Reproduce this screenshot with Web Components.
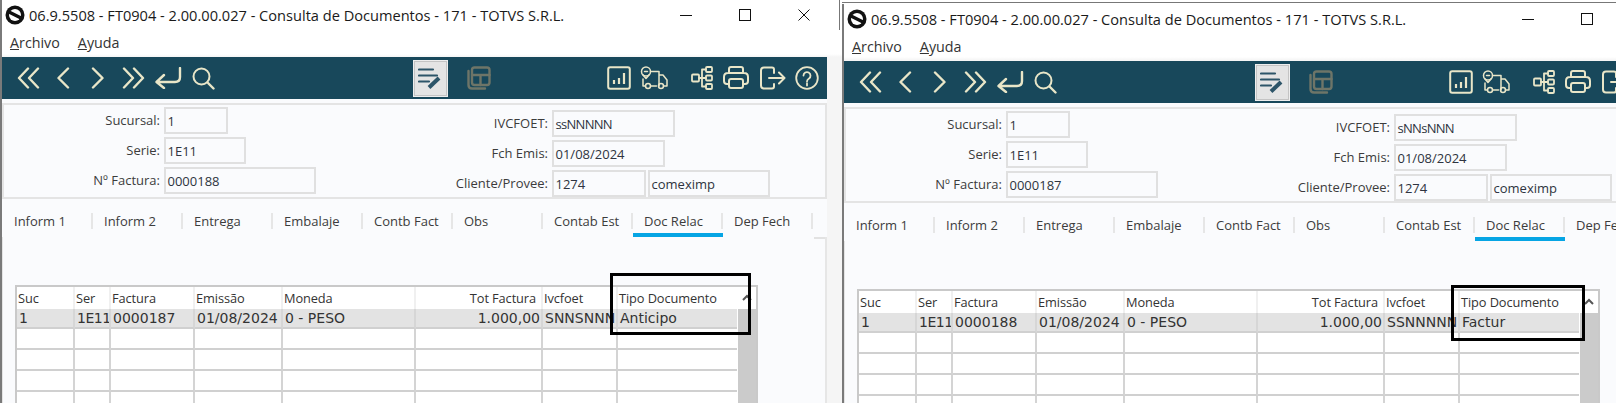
<!DOCTYPE html>
<html lang="es">
<head>
<meta charset="utf-8">
<title>Consulta de Documentos</title>
<style>
  html, body { margin: 0; height: 403px; overflow: hidden; background: #fff; }
  body { display: flex; align-items: flex-start; width: 1616px; font-family: "Open Sans", sans-serif; }
</style>
</head>
<body>
<erp-window caption="06.9.5508 - FT0904 - 2.00.00.027 - Consulta de Documentos - 171 - TOTVS S.R.L.">
  <form-panel>
    <form-field slot="left" label="Sucursal:" width="64" value="1"></form-field>
    <form-field slot="left" label="Serie:" width="82" value="1E11"></form-field>
    <form-field slot="left" label="Nº Factura:" width="152" value="0000188"></form-field>
    <form-field slot="right" label="IVCFOET:" width="123" value="ssNNNNN" tight></form-field>
    <form-field slot="right" label="Fch Emis:" width="113" value="01/08/2024"></form-field>
    <form-field slot="right" label="Cliente/Provee:" width="94" value="1274" extra="comeximp"></form-field>
  </form-panel>
  <tab-strip active="Doc Relac"></tab-strip>
  <doc-grid mark="593,-14,141,62" numero="0000187" ivcfoet="SNNSNNN" tipo="Anticipo"></doc-grid>
</erp-window>
<erp-window second caption="06.9.5508 - FT0904 - 2.00.00.027 - Consulta de Documentos - 171 - TOTVS S.R.L.">
  <form-panel>
    <form-field slot="left" label="Sucursal:" width="64" value="1"></form-field>
    <form-field slot="left" label="Serie:" width="82" value="1E11"></form-field>
    <form-field slot="left" label="Nº Factura:" width="152" value="0000187"></form-field>
    <form-field slot="right" label="IVCFOET:" width="123" value="sNNsNNN" tight></form-field>
    <form-field slot="right" label="Fch Emis:" width="113" value="01/08/2024"></form-field>
    <form-field slot="right" label="Cliente/Provee:" width="94" value="1274" extra="comeximp"></form-field>
  </form-panel>
  <tab-strip active="Doc Relac"></tab-strip>
  <doc-grid mark="592,-6,134,56" numero="0000188" ivcfoet="SSNNNNN" tipo="Factur"></doc-grid>
</erp-window>

<script>
// Toolbar icons, drawn at their real pixel size
const ICONS = {
  first: '<svg width="23" height="22" viewBox="0 0 23 22"><path d="M11 1.5 2 11l9 9.5M21 1.5 12 11l9 9.5"/></svg>',
  prev: '<svg width="14" height="22" viewBox="0 0 14 22"><path d="M12 1.5 2.5 11l9.5 9.5"/></svg>',
  next: '<svg width="14" height="22" viewBox="0 0 14 22"><path d="M2 1.5 11.5 11 2 20.5"/></svg>',
  last: '<svg width="23" height="22" viewBox="0 0 23 22"><path d="M2 1.5 11 11l-9 9.5M12 1.5 21 11l-9 9.5"/></svg>',
  enter: '<svg width="28" height="22" viewBox="0 0 28 22"><path d="M26 1v9q0 5-5 5H3M10 8l-7.500 7 7.500 6"/></svg>',
  search: '<svg width="23" height="23" viewBox="0 0 23 23"><circle cx="9.500" cy="9.500" r="8" stroke-width="2"/><path d="m15.500 15.500 6 6"/></svg>',
  edit: '<svg width="24" height="22" viewBox="0 0 24 22" style="stroke:#2d5569"><path d="M1 2.500h14M1 8.500h18M1 14.500h10" stroke-width="2.200"/><path d="m11 20.500 10-9.500" stroke-width="4" stroke-linecap="butt"/></svg>',
  layout: '<svg width="24" height="24" viewBox="0 0 24 24" style="stroke:#6e7568"><rect x="5" y="1.500" width="17.500" height="17.500" rx="2.500"/><path d="M5 9h17.500M13.500 9v10M1.500 5v14q0 3.500 3.500 3.500h13"/></svg>',
  chart: '<svg width="24" height="24" viewBox="0 0 24 24"><rect x="1.200" y="1.200" width="21.600" height="21.600" rx="2" stroke-width="2"/><path d="M7 18v-4M12 18v-6M17 18V7" stroke-width="2.200" stroke-linecap="butt"/></svg>',
  truck: '<svg width="28" height="24" viewBox="0 0 28 24" style="stroke-width:1.500"><circle cx="6" cy="5.500" r="4.500"/><path d="M2.800 8.800 6 12.500l3.200-3.700M4.500 5.500h3M10.500 5.500H19V20M3 13v7h2.500M10.500 20H16.500M19 9h4l4 5v6h-3.500"/><circle cx="8" cy="20" r="2.500"/><circle cx="21" cy="20" r="2.500"/></svg>',
  tree: '<svg width="22" height="24" viewBox="0 0 22 24" style="stroke-width:1.800"><rect x="1" y="8.500" width="7" height="7" rx="1"/><rect x="15" y="1" width="6" height="5" rx="1"/><rect x="15" y="9.500" width="6" height="5" rx="1"/><rect x="15" y="18" width="6" height="5" rx="1"/><path d="M8 12h7M11 12V3.500h4M11 12v8.500h4"/></svg>',
  printer: '<svg width="26" height="24" viewBox="0 0 26 24" style="stroke-width:2"><path d="M6 7V3q0-2 2-2h10q2 0 2 2v4M6 18H4q-3 0-3-3v-4q0-4 4-4h16q4 0 4 4v4q0 3-3 3h-2"/><rect x="6" y="13" width="14" height="9" rx="2"/></svg>',
  exit: '<svg width="26" height="24" viewBox="0 0 26 24" style="stroke-width:2"><path d="M12 1.500H4q-3 0-3 3v15q0 3 3 3h8q2 0 2-2v-2.500M14 7V3.500q0-2-2-2M9 12h15M19 6.500l5.500 5.500-5.500 5.500"/></svg>',
  help: '<svg width="24" height="24" viewBox="0 0 24 24" style="stroke-width:1.800"><circle cx="12" cy="12" r="10.800"/><path d="M8.500 9.500a3.500 3.500 0 1 1 5.500 3c-1.300.8-2 1.500-2 3M12 17.500v2"/></svg>',
};

class ErpWindow extends HTMLElement {
  constructor() {
    super();
    this.attachShadow({ mode: "open" });
  }

  connectedCallback() {
    this.shadowRoot.innerHTML = `
      <style>
        :host {
          display: block;
          flex: none;
          width: 842px;
          height: 403px;
          box-sizing: border-box;
          position: relative;
          overflow: hidden;
          background: linear-gradient(#fff 54px, #f5f5f5 57px);
          font-family: "Open Sans", sans-serif;
        }
        :host([second]) {
          margin-top: 2px;
          border-top: 1px solid #777;
          padding-top: 1px;
        }
        .frame {
          border-left: 2px solid #7a7a7a;
          height: 100%;
          box-sizing: border-box;
        }
        :host(:not([second]))::after {
          content: "";
          position: absolute;
          right: 2px;
          top: 0;
          width: 1px;
          height: 30px;
          background: #777;
        }
        .titlebar {
          display: flex;
          align-items: center;
          height: 29px;
          margin-bottom: 1px;
          font-size: 14.600px;
          color: #1a1a1a;
          white-space: nowrap;
        }
        .logo { margin: 0 4px 0 3px; flex: none; }
        .caption { width: 651px; overflow: hidden; }
        .winbtn { flex: none; display: block; }
        .winbtn.max { margin-left: 47px; }
        .winbtn.close { margin-left: 47px; }
        .menubar {
          display: flex;
          gap: 18px;
          height: 27px;
          padding: 3px 0 0 8px;
          box-sizing: border-box;
          font-size: 14.300px;
          color: #333;
        }
        .main { width: 825px; background: #fafbfd; height: 400px; }
        .gap { height: 4px; }
      </style>
      <div class="frame">
        <div class="titlebar">
          <svg class="logo" width="20" height="20" viewBox="0 0 20 20">
            <circle cx="10" cy="10" r="9.500" fill="#111"/>
            <circle cx="10" cy="10" r="6" fill="#fff"/>
            <path d="M4 7 16 13" stroke="#111" stroke-width="3.400"/>
          </svg>
          <span class="caption">${this.getAttribute("caption")}</span>
          <svg class="winbtn" width="12" height="12" viewBox="0 0 12 12" style="margin-left:0"><path d="M0 6.500h12" stroke="#111"/></svg>
          <svg class="winbtn max" width="12" height="12" viewBox="0 0 12 12"><rect x=".5" y=".5" width="11" height="11" fill="none" stroke="#111"/></svg>
          <svg class="winbtn close" width="12" height="12" viewBox="0 0 12 12"><path d="m.5.500 11 11M11.500.500l-11 11" stroke="#111"/></svg>
        </div>
        <div class="menubar"><span><u>A</u>rchivo</span><span><u>A</u>yuda</span></div>
        <div class="main">
          <tool-bar></tool-bar>
          <div class="gap"></div>
          <slot></slot>
        </div>
      </div>
    `;
  }
}

class ToolBar extends HTMLElement {
  constructor() {
    super();
    this.attachShadow({ mode: "open" });
  }

  connectedCallback() {
    const btn = (name, cls = "") => `<span class="btn ${cls}">${ICONS[name]}</span>`;
    this.shadowRoot.innerHTML = `
      <style>
        :host {
          display: flex;
          align-items: center;
          height: 42px;
          padding-left: 8.500px;
          box-sizing: border-box;
          background: #18485b;
        }
        .btn {
          flex: none;
          width: 35px;
          height: 37px;
          display: flex;
          align-items: center;
          justify-content: center;
          box-sizing: border-box;
        }
        .btn.on {
          width: 35px;
          background: #e4e4e4;
          border: 2px solid #c4c4c4;
          outline: 1px solid #eee;
          outline-offset: -1px;
        }
        svg {
          fill: none;
          stroke: #e9e6c8;
          stroke-width: 2.400;
          stroke-linecap: round;
          stroke-linejoin: round;
        }
        .m1 { margin-left: 192px; }
        .m2 { margin-left: 14px; }
        .m3 { margin-left: 105px; }
        .m4 { margin-left: 13px; }
        .m5 { margin-left: -1px; }
        .m6 { margin-left: 2px; }
      </style>
      ${btn("first")}${btn("prev")}${btn("next")}${btn("last")}${btn("enter")}${btn("search")}
      ${btn("edit", "on m1")}${btn("layout", "m2")}
      ${btn("chart", "m3")}${btn("truck")}${btn("tree", "m4")}${btn("printer", "m5")}${btn("exit", "m6")}${btn("help", "m5")}
    `;
  }
}

class FormPanel extends HTMLElement {
  constructor() {
    super();
    this.attachShadow({ mode: "open" });
  }

  connectedCallback() {
    this.shadowRoot.innerHTML = `
      <style>
        :host {
          display: flex;
          height: 96px;
          box-sizing: border-box;
          border: 2px solid #e4e4e4;
        }
        .col { display: flex; flex-direction: column; gap: 3px; }
        .left { width: 396px; padding-top: 2px; --label-width: 156px; }
        .right { padding-top: 5px; --label-width: 148px; }
      </style>
      <div class="col left"><slot name="left"></slot></div>
      <div class="col right"><slot name="right"></slot></div>
    `;
  }
}

class FormField extends HTMLElement {
  constructor() {
    super();
    this.attachShadow({ mode: "open" });
  }

  connectedCallback() {
    const extra = this.getAttribute("extra");
    this.shadowRoot.innerHTML = `
      <style>
        :host {
          display: flex;
          align-items: center;
          height: 27px;
          font-family: "Open Sans", sans-serif;
          font-size: 13px;
          color: #3c3c3c;
        }
        :host([tight]) .input { letter-spacing: -0.700px; }
        label {
          width: var(--label-width);
          margin-right: 4px;
          padding-bottom: 2px;
          text-align: right;
          white-space: nowrap;
        }
        .input {
          height: 27px;
          box-sizing: border-box;
          border: 2px solid #e0e0e0;
          padding: 1px 0 0 1.500px;
          line-height: 22px;
          color: #2e3440;
          white-space: nowrap;
        }
        .extra { margin-left: 2px; width: 122px; }
      </style>
      <label>${this.getAttribute("label")}</label>
      <div class="input" style="width:${this.getAttribute("width")}px">${this.getAttribute("value")}</div>
      ${extra ? `<div class="input extra">${extra}</div>` : ""}
    `;
  }
}

class TabStrip extends HTMLElement {
  constructor() {
    super();
    this.attachShadow({ mode: "open" });
  }

  connectedCallback() {
    const tabs = ["Inform 1", "Inform 2", "Entrega", "Embalaje", "Contb Fact", "Obs", "Contab Est", "Doc Relac", "Dep Fech"];
    const active = this.getAttribute("active");
    this.shadowRoot.innerHTML = `
      <style>
        :host {
          display: flex;
          height: 38px;
          padding: 14px 0 0 1px;
          box-sizing: border-box;
          font-family: "Open Sans", sans-serif;
          font-size: 13px;
          color: #3c3c3c;
        }
        .tab {
          width: 90px;
          height: 24px;
          box-sizing: border-box;
          padding: 0 0 0 11px;
          line-height: 16px;
          white-space: nowrap;
          background: linear-gradient(#e6e6e6, #e6e6e6) right top / 2px 16px no-repeat;
        }
        .tab.on { border-bottom: 4.500px solid #06a5e4; }
      </style>
      ${tabs.map((t) => `<div class="tab ${t === active ? "on" : ""}">${t}</div>`).join("")}
    `;
  }
}

class DocGrid extends HTMLElement {
  constructor() {
    super();
    this.attachShadow({ mode: "open" });
  }

  connectedCallback() {
    const head = ["Suc", "Ser", "Factura", "Emissão", "Moneda", "Tot Factura", "Ivcfoet", "Tipo Documento"];
    const row = ["1", "1E11", this.getAttribute("numero"), "01/08/2024", "0 - PESO", "1.000,00", this.getAttribute("ivcfoet"), this.getAttribute("tipo")];
    const cells = (list, cls) => list.map((t, i) => `<div class="cell ${cls} c${i}">${t}</div>`).join("");
    const [left, top, width, height] = this.getAttribute("mark").split(",");
    const empty = head.map(() => "");
    this.shadowRoot.innerHTML = `
      <style>
        :host {
          display: block;
          height: 170px;
          box-sizing: border-box;
          padding: 48px 0 0 12px;
          border-left: 1px solid #e4e4e4;
          border-right: 2px solid #e6e6e6;
          background: linear-gradient(90deg, transparent 811px, #e2e2e2 811px) top / 100% 2px no-repeat;
        }
        .box {
          position: relative;
          width: 743px;
          height: 130px;
          box-sizing: border-box;
          border: 2px solid #c9c9c9;
          border-bottom: 0;
          background: #fff;
        }
        .wrap { display: flex; height: 100%; }
        .table {
          display: grid;
          grid-template-columns: 58px 36px 84px 88px 133px 127px 75px 119px;
          grid-auto-rows: 21px;
          width: 720px;
        }
        .cell {
          box-sizing: border-box;
          overflow: hidden;
          white-space: nowrap;
          border-right: 2px solid #d4d4d4;
          border-bottom: 2px solid #d0d0d0;
          font-family: "DejaVu Sans", sans-serif;
          font-size: 14px;
          line-height: 20px;
          padding-left: 2px;
          color: #333;
        }
        .head {
          height: 22px;
          margin-bottom: -1px;
          font-family: "Open Sans", sans-serif;
          font-size: 12.800px;
          letter-spacing: -0.100px;
          padding-left: 1px;
          border-right-color: #f0f0f0;
          border-bottom: 0;
          line-height: 22px;
          color: #333;
        }
        .sel { background: #e3e3e3; margin-top: 1px; height: 20px; border-right-color: #d6d6d6; line-height: 19px; }
        .sel.c1 { letter-spacing: -0.500px; }
        .c7 { border-right: 0; }
        .c5 { text-align: right; padding: 0 1px 0 0; }
        .head.c5 { padding-right: 5px; }
        .bar { width: 20px; margin-left: 1px; background: linear-gradient(#fff 22px, #cbcbcb 22px); }
        .bar svg { display: block; margin: 7px 0 0 4px; }
        .mark {
          position: absolute;
          box-sizing: border-box;
          border: 3.500px solid #000;
        }
      </style>
      <div class="box">
        <div class="wrap">
          <div class="table">
            ${cells(head, "head")}
            ${cells(row, "sel")}
            ${cells(empty, "")}${cells(empty, "")}${cells(empty, "")}${cells(empty, "")}
          </div>
          <div class="bar"><svg width="10" height="7" viewBox="0 0 10 7"><path d="M1 6 5 2l4 4" fill="none" stroke="#555" stroke-width="2"/></svg></div>
        </div>
        <div class="mark" style="left:${left}px;top:${top}px;width:${width}px;height:${height}px"></div>
      </div>
    `;
  }
}

customElements.define("erp-window", ErpWindow);
customElements.define("tool-bar", ToolBar);
customElements.define("form-panel", FormPanel);
customElements.define("form-field", FormField);
customElements.define("tab-strip", TabStrip);
customElements.define("doc-grid", DocGrid);
</script>
</body>
</html>
